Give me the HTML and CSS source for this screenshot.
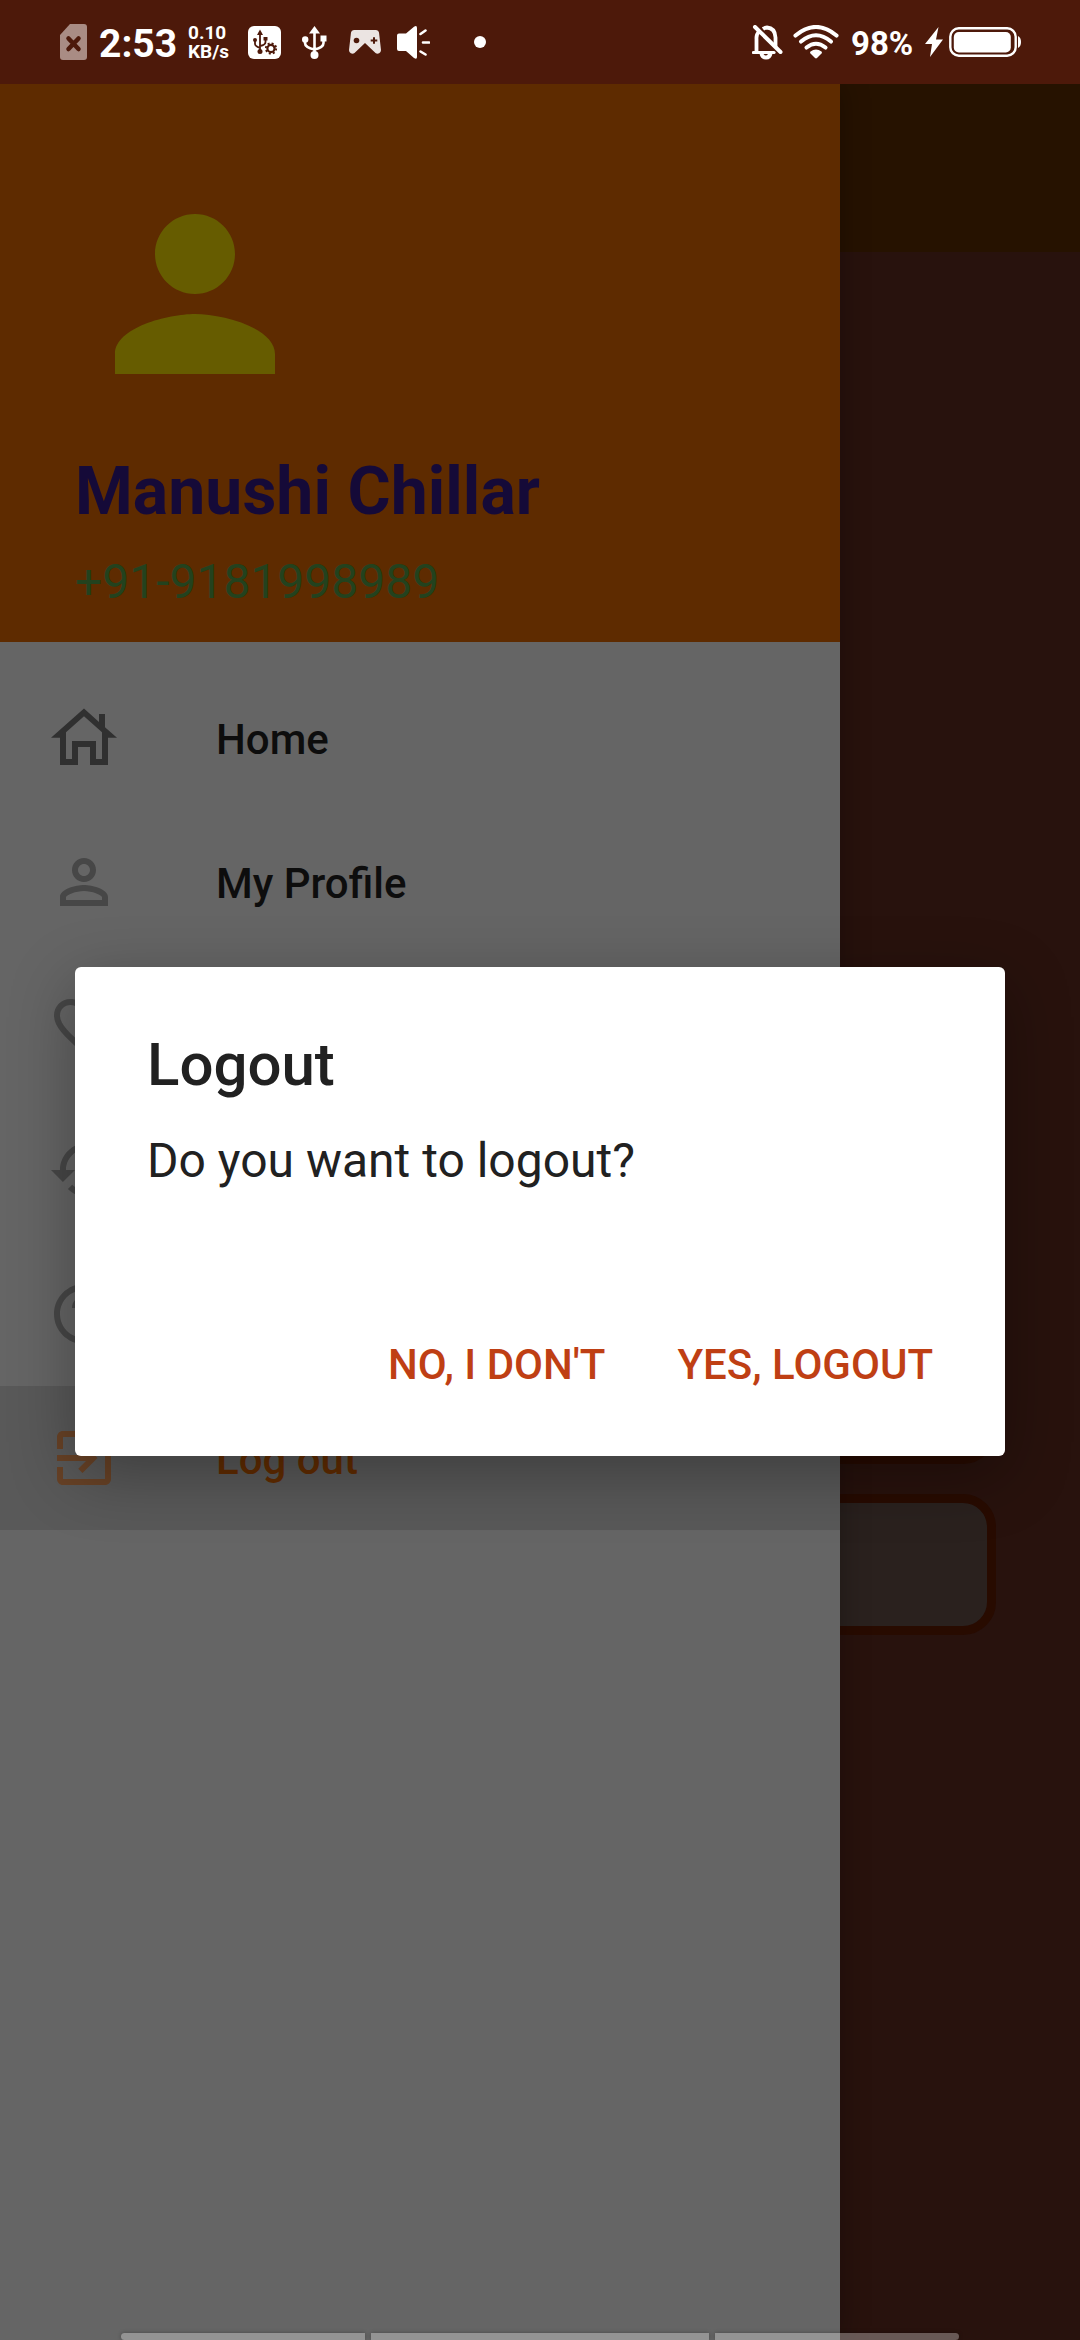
FILE: index.html
```html
<!DOCTYPE html>
<html lang="en">
<head>
<meta charset="utf-8">
<title>Logout</title>
<link rel="stylesheet" href="styles.css">
</head>
<body>
<div class="phone">
  <header class="status">
    <svg class="st-sim" width="27" height="36" viewBox="0 0 27 36"><path d="M10 0H24a3 3 0 0 1 3 3V33a3 3 0 0 1-3 3H3a3 3 0 0 1-3-3V11Z" fill="#a98c84"/><path d="M8.500 14.500l10 10.500M18.500 14.500l-10 10.500" stroke="#4d190a" stroke-width="4.500" stroke-linecap="round"/></svg>
    <span class="st-time">2:53</span>
    <span class="st-rate"><span>0.10</span><span>KB/s</span></span>
    <svg class="st-usbset" width="33" height="33" viewBox="0 0 33 33"><rect width="33" height="33" rx="6" fill="#fff"/><g fill="none" stroke="#4d190a" stroke-width="1.800"><path d="M12 7v18M7 14v4q0 2 5 4M17.500 12v4q0 3-5.500 4"/><circle cx="23" cy="22.500" r="3.600" stroke-width="2.200"/><circle cx="23" cy="22.500" r="5.200" stroke-dasharray="2.040 2.040"/></g><g fill="#4d190a"><path d="M12 3.500l3 5.500H9z"/><circle cx="7" cy="14" r="2"/><circle cx="12" cy="25.500" r="2.500"/><path d="M15.500 11h4v3.500h-4z"/></g></svg>
    <svg class="st-usb" width="25" height="33" viewBox="0 0 25 33"><g fill="none" stroke="#fff" stroke-width="2.600"><path d="M12.500 5v24M3 14v3q0 4.500 9.500 6.500M21.500 12v5q0 4.500-9 6.500"/></g><g fill="#fff"><path d="M12.500 0l5.500 7.500H7z"/><circle cx="3.200" cy="13.500" r="3.200"/><circle cx="12.500" cy="29" r="4"/><path d="M18.500 9.500h6v6h-6z"/></g></svg>
    <svg class="st-pad" width="32" height="24" viewBox="0 0 32 24"><path d="M5 0H27a3 3 0 0 1 3 2.600L32 20a3.500 3.500 0 0 1-5.500 3L16 13 5.500 23A3.500 3.500 0 0 1 0 20L2 2.600A3 3 0 0 1 5 0Z" fill="#ebe4e2"/><circle cx="7.500" cy="10.500" r="2.800" fill="#4d190a"/><path d="M25 7.200v6.600M21.700 10.500h6.600" stroke="#4d190a" stroke-width="2"/></svg>
    <svg class="st-sound" width="33" height="33" viewBox="0 0 33 33"><path d="M2 7.500h7L17 .8q3-2 3 1.200v29q0 3-3 1L9 25H2q-2 0-2-2V9.500q0-2 2-2Z" fill="#fff"/><path d="M23.500 8l5-3.500M26 16.500h6M23.500 25.500l5 3" stroke="#fff" stroke-width="2.600" stroke-linecap="round"/></svg>
    <span class="st-dot"></span>
    <span class="st-grow"></span>
    <svg class="st-bell" width="31" height="35" viewBox="0 0 31 35"><g fill="none" stroke="#fff"><path d="M4.500 27V14a10 10 0 0 1 3-8M11 4q2-1.500 4-1.500 8 .5 8.500 10V22" stroke-width="3.800"/><path d="M1.500 27.500H22" stroke-width="3.200" stroke-linecap="round"/><path d="M3 2L28.500 27" stroke-width="4" stroke-linecap="round"/></g><path d="M7.500 28.500h13q-1 6-6.500 6t-6.500-6Z" fill="#fff"/><path d="M11.500 29h4.500q-2.200 3-4.500 0Z" fill="#4d190a"/></svg>
    <svg class="st-wifi" width="46" height="34" viewBox="0 0 46 34"><g fill="none" stroke="#fff" stroke-width="4.100" stroke-linecap="round"><path d="M2.500 10.500Q23-6.500 43.500 10.500"/><path d="M8 16.500q15-12.500 30 0"/><path d="M13.500 22.500q9.500-7.500 19 0"/></g><path d="M17.500 26.500q5.500-4 11 0 1 1 0 2L24 33q-1 .9-2 0l-4.500-4.500q-1-1 0-2Z" fill="#fff"/></svg>
    <span class="st-pct">98%</span>
    <svg class="st-bolt" width="18" height="30" viewBox="0 0 18 30"><path d="M13.500 0L0 17h7L5 30 18 12.500h-7Z" fill="#fff"/></svg>
    <svg class="st-batt" width="72" height="30" viewBox="0 0 72 30"><rect x="1.300" y="1.300" width="65.400" height="27.400" rx="8.500" fill="none" stroke="#fff" stroke-width="2.400"/><rect x="4.800" y="5" width="57" height="20.500" rx="5" fill="#fff"/><path d="M69 9q3 1.500 3 6t-3 6Z" fill="#fff"/></svg>
  </header>

  <div class="screen">
    <aside class="drawer">
      <div class="account">
        <svg class="avatar" viewBox="0 0 24 24"><path d="M12 12c2.210 0 4-1.790 4-4s-1.790-4-4-4-4 1.790-4 4 1.790 4 4 4zm0 2c-2.670 0-8 1.340-8 4v2h16v-2c0-2.660-5.330-4-8-4z"/></svg>
        <div class="name">Manushi Chillar</div>
        <div class="number">+91-9181998989</div>
      </div>
      <nav class="menu">
        <a class="item"><svg class="icon icon-dark" viewBox="0 0 24 24"><path fill-rule="evenodd" d="M12 2.200L17 6.650V4h2v4.430L23 11.900H20V21h-6v-6h-4v6H4V11.900H1ZM6 19h2v-6h8v6h2V10.050L12 4.750 6 10.050Z"/></svg><span>Home</span></a>
        <a class="item"><svg class="icon" viewBox="0 0 24 24"><path d="M12 6c1.100 0 2 .9 2 2s-.9 2-2 2-2-.9-2-2 .9-2 2-2m0 9c2.700 0 5.800 1.290 6 2v1H6v-.99c.2-.72 3.300-2.010 6-2.010m0-11C9.790 4 8 5.790 8 8s1.790 4 4 4 4-1.790 4-4-1.790-4-4-4zm0 9c-2.670 0-8 1.340-8 4v3h16v-3c0-2.660-5.330-4-8-4z"/></svg><span>My Profile</span></a>
        <a class="item"><svg class="icon" viewBox="0 0 24 24"><path d="M16.500 3c-1.740 0-3.410.81-4.500 2.090C10.910 3.810 9.240 3 7.500 3 4.420 3 2 5.420 2 8.500c0 3.780 3.400 6.860 8.550 11.540L12 21.350l1.450-1.320C18.600 15.360 22 12.280 22 8.500 22 5.420 19.580 3 16.500 3zm-4.400 15.550l-.1.100-.1-.1C7.140 14.240 4 11.390 4 8.500 4 6.500 5.500 5 7.500 5c1.540 0 3.040.99 3.570 2.360h1.870C13.460 5.990 14.960 5 16.500 5c2 0 3.500 1.500 3.500 3.500 0 2.890-3.140 5.740-7.900 10.050z"/></svg></a>
        <a class="item"><svg class="icon" viewBox="0 0 24 24"><path d="M13 3c-4.970 0-9 4.030-9 9H1l3.890 3.890.07.14L9 12H6c0-3.870 3.130-7 7-7s7 3.130 7 7-3.130 7-7 7c-1.930 0-3.680-.79-4.940-2.060l-1.420 1.420C8.270 19.990 10.510 21 13 21c4.970 0 9-4.030 9-9s-4.030-9-9-9zm-1 5v5l4.280 2.540.72-1.210-3.500-2.080V8H12z"/></svg></a>
        <a class="item"><svg class="icon" viewBox="0 0 24 24"><path d="M11 18h2v-2h-2v2zm1-16C6.480 2 2 6.480 2 12s4.480 10 10 10 10-4.480 10-10S17.520 2 12 2zm0 18c-4.410 0-8-3.590-8-8s3.590-8 8-8 8 3.590 8 8-3.590 8-8 8zm0-14c-2.210 0-4 1.790-4 4h2c0-1.100.9-2 2-2s2 .9 2 2c0 2-3 1.750-3 5h2c0-2.250 3-2.500 3-5 0-2.210-1.790-4-4-4z"/></svg></a>
        <a class="item item-active"><svg class="icon" viewBox="0 0 24 24"><path d="M10.090 15.590L11.500 17l5-5-5-5-1.410 1.410L12.670 11H3v2h9.670l-2.580 2.590zM19 3H5c-1.110 0-2 .9-2 2v4h2V5h14v14H5v-4H3v4c0 1.100.89 2 2 2h14c1.100 0 2-.9 2-2V5c0-1.100-.9-2-2-2z"/></svg><span>Log out</span></a>
      </nav>
    </aside>
    <main class="page">
      <div class="toolbar"></div>
      <div class="fields"><div class="field field-solid"></div><div class="field"></div></div>
    </main>
  </div>

  <section class="dialog" role="dialog">
    <h1 class="dialog-title">Logout</h1>
    <p class="dialog-text">Do you want to logout?</p>
    <div class="dialog-actions"><span class="act act-no">NO, I DON'T</span><span class="act act-yes">YES, LOGOUT</span></div>
  </section>

  <div class="navhint"><i class="hint-side hint-left"></i><i class="hint-mid"></i><i class="hint-side hint-right"></i></div>
</div>
</body>
</html>
```
FILE: styles.css
```css
* { box-sizing: border-box; }
body { margin: 0; font-family: Roboto, "Liberation Sans", sans-serif; }
svg { display: block; flex: none; }
.phone { position: relative; width: 1080px; height: 2340px; overflow: hidden; display: flex; flex-direction: column; }

/* status bar */
.status { height: 84px; flex: none; display: flex; align-items: center; padding: 0 59px 0 60px; background: #4d190a; color: #fff; font-weight: 700; }
.st-grow { flex: 1; }
.st-time { margin-left: 12px; width: 77px; font-size: 39px; line-height: 46px; padding-top: 3px; white-space: nowrap; }
.st-rate { margin-left: 12px; width: 60px; display: flex; flex-direction: column; font-size: 19px; line-height: 19px; }
.st-usbset { margin-top: 1px; }
.st-usb { margin-left: 21px; margin-top: 1px; }
.st-pad { margin-left: 22px; }
.st-sound { margin-left: 16px; margin-top: 1px; }
.st-dot { width: 12px; height: 12px; border-radius: 50%; background: #fff; margin-left: 44px; }
.st-wifi { margin-left: 10px; margin-top: -1px; }
.st-pct { margin-left: 12px; width: 62px; font-size: 33px; line-height: 39px; padding-top: 2px; white-space: nowrap; }
.st-bolt { margin-left: 12px; }
.st-batt { margin-left: 6px; }

/* screen under the scrim */
.screen { flex: 1; display: flex; }
.drawer { width: 840px; flex: none; background: #656565; z-index: 1; box-shadow: 0 0 28px rgba(0, 0, 0, .3); clip-path: inset(0 -60px 0 0); }
.account { height: 558px; padding: 90px 75px 0; background: #5e2b00; }
.avatar { width: 240px; height: 240px; fill: #665c00; }
.name { margin-top: 39px; font-size: 66px; line-height: 77px; font-weight: 700; letter-spacing: .08px; color: #150a38; }
.number { margin-top: 23px; font-size: 48px; line-height: 57px; color: #23421e; }
.menu { padding-top: 24px; }
.item { height: 144px; padding-left: 48px; display: flex; align-items: center; gap: 96px; font-size: 42px; font-weight: 500; color: #0d0d0d; }
.item span { padding-top: 2px; }
.icon { width: 72px; height: 72px; fill: #474747; }
.icon-dark { fill: #303030; }
.item-active { background: #595959; color: #622c00; }
.item-active .icon { fill: #684226; }
.page { flex: 1; background: #28120d; }
.toolbar { height: 168px; background: #261200; }
.fields { margin-left: -756px; width: 912px; padding-top: 1071px; display: flex; flex-direction: column; gap: 30px; }
.field { height: 141px; border: 9px solid #280b00; border-radius: 33px; background: #2a211e; }
.field-solid { background: #280b00; }

/* dialog */
.dialog { position: absolute; left: 75px; top: 967px; width: 930px; height: 489px; z-index: 2; border-radius: 6px; background: #fff; padding: 62px 72px 0; color: #212121; box-shadow: 0 18px 66px rgba(0, 0, 0, .32); }
.dialog-title { margin: 0; font-size: 60px; line-height: 71px; font-weight: 500; }
.dialog-text { margin: 32px 0 0; font-size: 48px; line-height: 57px; }
.dialog-actions { margin-top: 151px; display: flex; justify-content: flex-end; gap: 72px; font-size: 42px; line-height: 50px; font-weight: 500; color: #bf3f14; white-space: nowrap; }

/* gesture bar */
.navhint { position: absolute; z-index: 3; left: 121px; bottom: 0; width: 838px; height: 7px; display: flex; gap: 6px; }
.navhint i { background: rgba(255, 255, 255, .3); box-shadow: 0 0 4px rgba(0, 0, 0, .3); }
.hint-side { width: 244px; }
.hint-left { border-radius: 4px 0 0 4px; }
.hint-right { border-radius: 0 4px 4px 0; }
.hint-mid { flex: 1; }
```
